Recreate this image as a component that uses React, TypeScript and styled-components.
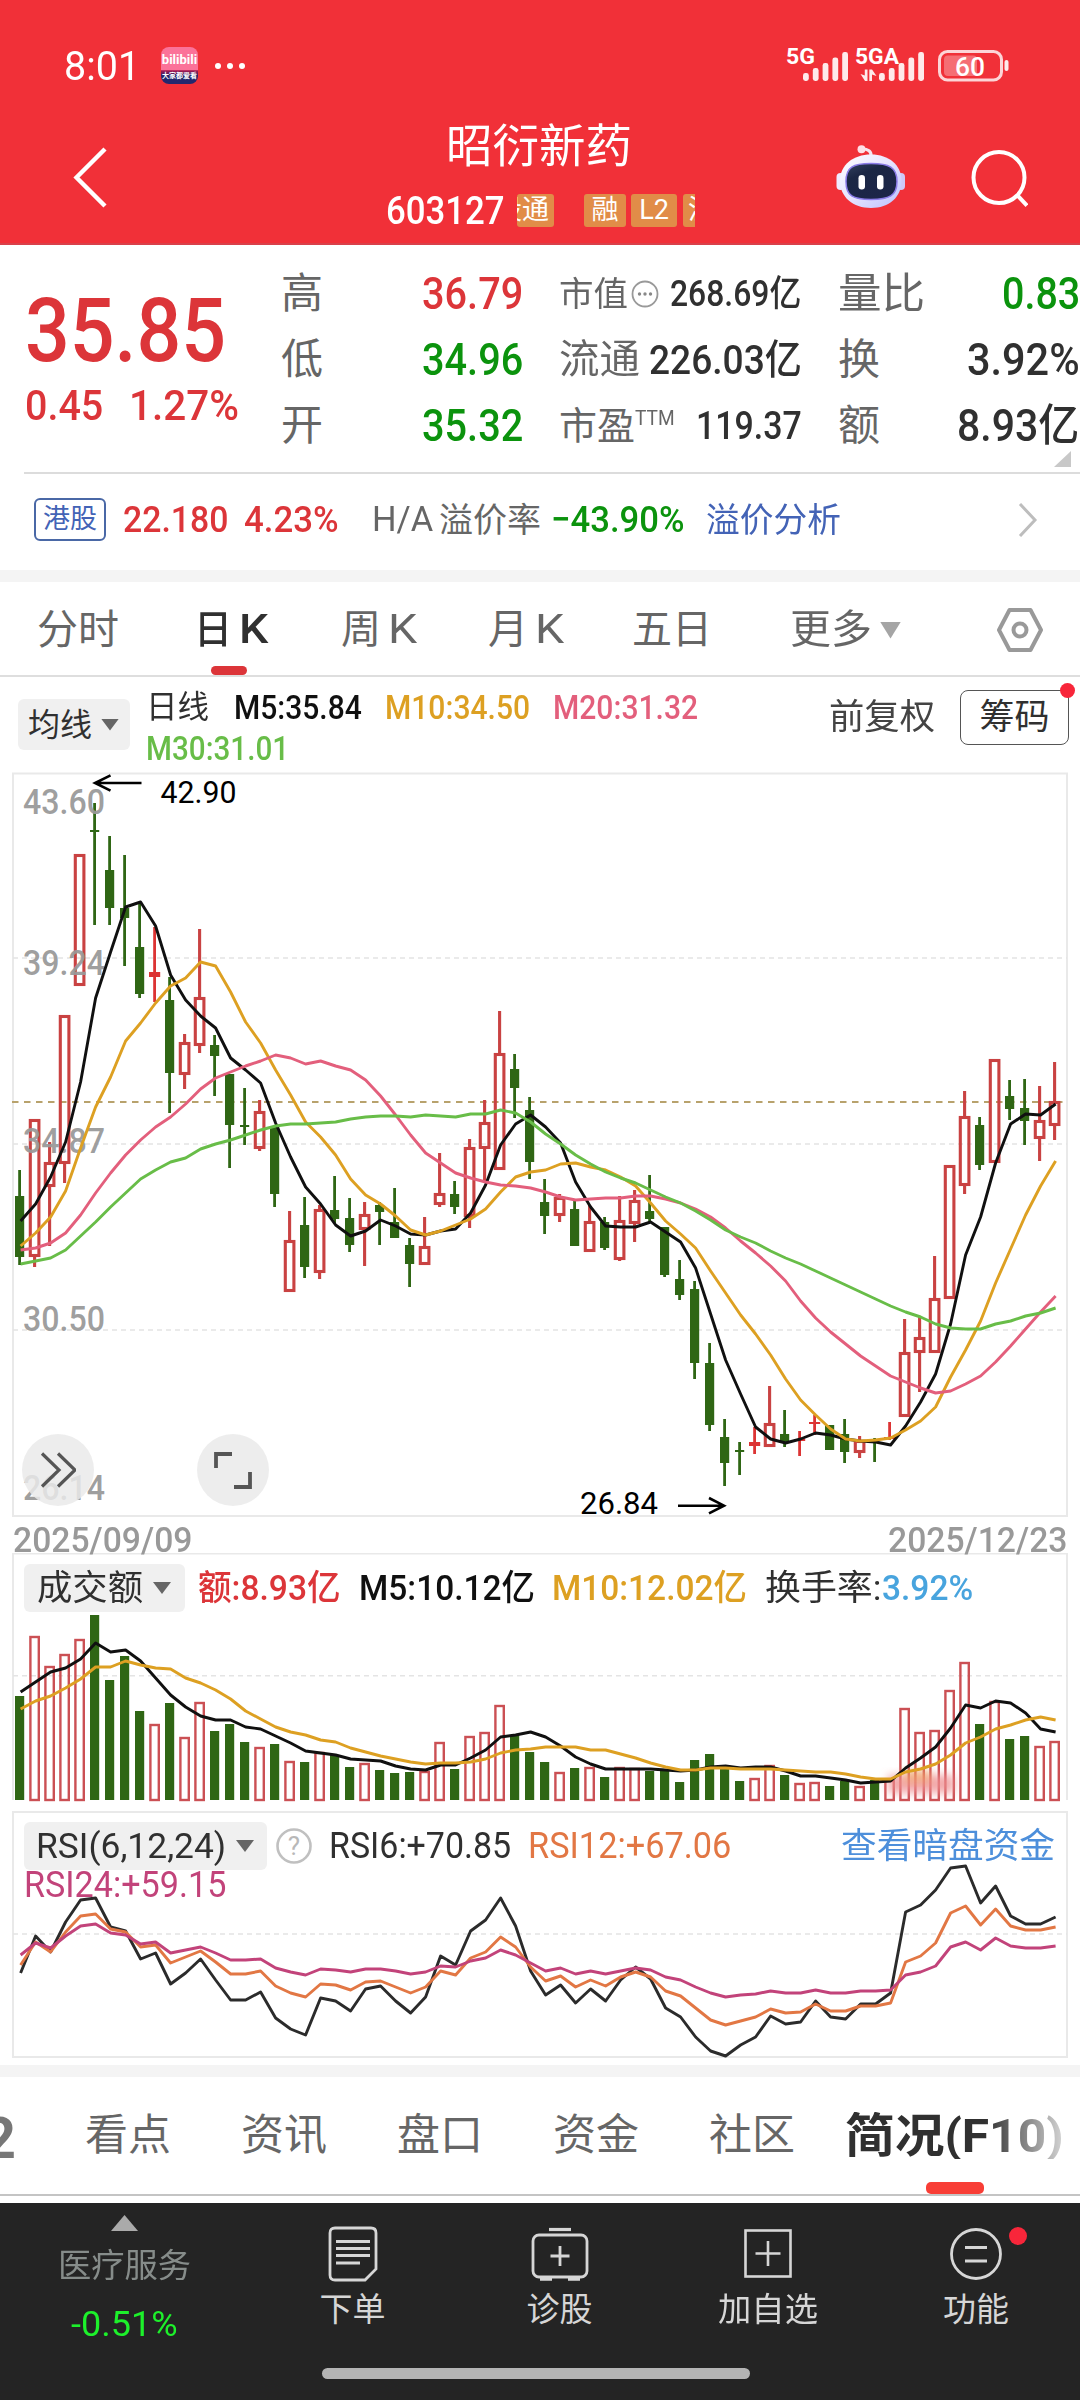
import React, { useLayoutEffect, useRef, useState } from 'react';
import styled, { createGlobalStyle, css } from 'styled-components';

const C = {
  brand: '#f13038',
  red: '#dc3539',
  green: '#0b930d',
  ink: '#303030',
  label: '#666666',
  muted: '#999999',
  up: '#c94242',
  down: '#2f6614',
  frame: '#e9e9e9',
  grid: '#e4e4e4',
  m5: '#101010',
  m10: '#dda022',
  m20: '#e35f7c',
  m30: '#68bd48',
  rsi12: '#e27744',
  rsi24: '#c2437a',
  blue: '#4363b6',
  link: '#4d8fdb',
  chip: '#f0f0f0',
  bar: '#242424',
  barText: '#d6d6d6',
};

const Global = createGlobalStyle`
  html, body { margin: 0; padding: 0; background: #fff; overflow-x: hidden; }
  body { font-family: Roboto, "Noto Sans CJK SC", sans-serif; color: ${C.ink}; }
  * { box-sizing: border-box; }
  svg { display: block; flex: none; }
`;

/* ---------- text set to a fixed measure ---------- */

const Measure = styled.span<{ $w: number; $ml: number; $size: number; $weight: number; $color: string; $up: number }>`
  display: block;
  flex: none;
  width: ${(p) => p.$w}px;
  margin-left: ${(p) => p.$ml}px;
  margin-bottom: ${(p) => p.$up}px;
  font-size: ${(p) => p.$size}px;
  font-weight: ${(p) => p.$weight};
  line-height: 1;
  color: ${(p) => p.$color};
  white-space: nowrap;
`;

const Glyphs = styled.span`
  display: inline-block;
  transform-origin: 0 50%;
  line-height: 1;
`;

type TextProps = {
  w: number;
  ml?: number;
  size: number;
  weight?: number;
  color?: string;
  up?: number;
  children: React.ReactNode;
};

function Text({ w, ml = 0, size, weight = 400, color = C.ink, up = 0, children }: TextProps) {
  const ref = useRef<HTMLSpanElement>(null);
  const [k, setK] = useState(1);
  useLayoutEffect(() => {
    if (ref.current && ref.current.offsetWidth) setK(w / ref.current.offsetWidth);
  }, [w, size, children]);
  return (
    <Measure $w={w} $ml={ml} $size={size} $weight={weight} $color={color} $up={up}>
      <Glyphs ref={ref} style={{ transform: `scaleX(${k})` }}>{children}</Glyphs>
    </Measure>
  );
}

/* ---------- layout parts ---------- */

const Screen = styled.main`
  width: 1080px;
  height: 2400px;
  display: flex;
  flex-direction: column;
  overflow: hidden;
  background: #fff;
`;

const Row = styled.div<{ $h: number; $pl?: number }>`
  display: flex;
  flex: none;
  align-items: center;
  height: ${(p) => p.$h}px;
  padding-left: ${(p) => p.$pl ?? 0}px;
`;

const Header = styled.header`
  flex: none;
  height: 245px;
  background: ${C.brand};
  border-bottom: 2px solid #d9414a;
`;

const StatusBar = styled(Row)`
  padding-top: 19px;
  svg + svg { margin-left: 18px; }
`;

const AppIcon = styled.span`
  display: flex;
  flex-direction: column;
  flex: none;
  width: 37px;
  height: 37px;
  margin-left: 21px;
  border-radius: 8px;
  overflow: hidden;
  background: linear-gradient(#fb7299 0 62%, #a5194f 64%, #24276d 78%);
`;

const AppIconLine = styled.span<{ $h: number; $size: number }>`
  height: ${(p) => p.$h}px;
  line-height: ${(p) => p.$h}px;
  font-size: ${(p) => p.$size}px;
  font-weight: 700;
  color: #fff;
  text-align: center;
  white-space: nowrap;
`;

const Dots = styled.span`
  display: flex;
  gap: 6px;
  margin-left: 17px;
  i { width: 6px; height: 6px; border-radius: 3px; background: #fff; }
`;

const Spacer = styled.span`
  flex: 1;
`;

const TitleRow = styled.div`
  display: grid;
  grid-template-columns: 386px 1fr 386px;
  height: 133px;
`;

const TitleSide = styled.div<{ $pl: number }>`
  display: flex;
  align-items: center;
  padding: 0 0 5px ${(p) => p.$pl}px;
`;

const TitleBlock = styled.div`
  padding-top: 7px;
`;

const Tags = styled.div`
  display: flex;
  width: 178px;
  height: 33px;
  margin-left: 12px;
  overflow: hidden;
`;

const Tag = styled.span<{ $w: number; $ml?: number; $align?: string }>`
  display: flex;
  flex: none;
  align-items: center;
  justify-content: ${(p) => p.$align ?? 'center'};
  width: ${(p) => p.$w}px;
  height: 33px;
  margin-left: ${(p) => p.$ml ?? 0}px;
  padding: 0 5px;
  border-radius: 3px;
  background: #e18c48;
  color: #fff;
  font-size: 27px;
  line-height: 1;
  white-space: nowrap;
`;

const Quote = styled.section`
  display: grid;
  flex: none;
  grid-template-columns: 281px 278px 279px 242px;
  height: 227px;
  padding-top: 14px;
`;

const PriceCell = styled.div`
  padding: 26px 0 0 25px;
`;

const Facts = styled.div`
  display: flex;
  flex-direction: column;
  padding-top: 2px;
`;

const CornerMark = styled.div`
  width: 17px;
  height: 16px;
  margin: -8px 0 0 216px;
  background: #c8c8c8;
  clip-path: polygon(100% 0, 100% 100%, 0 100%);
`;

const HkRow = styled.section`
  display: flex;
  flex: none;
  align-items: center;
  height: 98px;
  margin-left: 24px;
  padding: 0 42px 5px 10px;
  border-top: 2px solid #dcdcdc;
`;

const HkTag = styled.span`
  display: flex;
  flex: none;
  align-items: center;
  justify-content: center;
  width: 72px;
  height: 43px;
  border: 2px solid #4a68a6;
  border-radius: 6px;
`;

const Band = styled.div`
  flex: none;
  height: 12px;
  background: #f4f4f4;
`;

const Tabs = styled.nav<{ $h: number; $line: string }>`
  display: flex;
  flex: none;
  height: ${(p) => p.$h}px;
  border-bottom: 2px solid ${(p) => p.$line};
`;

const Tab = styled.div<{ $ml: number; $pt: number }>`
  display: flex;
  flex: none;
  flex-direction: column;
  align-items: center;
  justify-content: space-between;
  margin-left: ${(p) => p.$ml}px;
  padding-top: ${(p) => p.$pt}px;
`;

const Underline = styled.i<{ $w: number; $h: number; $color: string; $ml?: number }>`
  width: ${(p) => p.$w}px;
  height: ${(p) => p.$h}px;
  margin-left: ${(p) => p.$ml ?? 0}px;
  border-radius: 5px;
  background: ${(p) => p.$color};
`;

const Inline = styled.span`
  display: flex;
  align-items: center;
`;

const Triangle = styled.i<{ $w: number; $h: number; $ml: number; $color: string; $flip?: boolean }>`
  flex: none;
  width: ${(p) => p.$w}px;
  height: ${(p) => p.$h}px;
  margin-left: ${(p) => p.$ml}px;
  background: ${(p) => p.$color};
  clip-path: ${(p) => (p.$flip ? 'polygon(50% 0, 100% 100%, 0 100%)' : 'polygon(0 0, 100% 0, 50% 100%)')};
`;

const MaBar = styled.section`
  display: flex;
  flex: none;
  height: 95px;
`;

const Chip = styled.div<{ $w: number; $h: number; $pl: number }>`
  display: flex;
  flex: none;
  align-items: center;
  width: ${(p) => p.$w}px;
  height: ${(p) => p.$h}px;
  padding-left: ${(p) => p.$pl}px;
  border-radius: 6px;
  background: ${C.chip};
`;

const MaChipSlot = styled.div`
  width: 146px;
  padding: 22px 0 0 18px;
`;

const MaLegend = styled.div`
  width: 683px;
  padding-top: 9px;
`;

const MaActions = styled.div`
  display: flex;
  align-items: center;
  height: 55px;
  margin-top: 13px;
`;

const ChipsButton = styled.div`
  position: relative;
  display: flex;
  align-items: center;
  justify-content: center;
  width: 109px;
  height: 55px;
  margin-left: 25px;
  border: 1.5px solid #555;
  border-radius: 8px;
`;

const RedDot = styled.i<{ $d: number; $top: number; $right: number }>`
  position: absolute;
  top: ${(p) => p.$top}px;
  right: ${(p) => p.$right}px;
  width: ${(p) => p.$d}px;
  height: ${(p) => p.$d}px;
  border-radius: 50%;
  background: #f8263a;
`;

const stacked = css`
  grid-area: 1 / 1;
`;

const Pane = styled.section<{ $h: number }>`
  display: grid;
  flex: none;
  height: ${(p) => p.$h}px;
`;

const Plot = styled.svg`
  ${stacked}
`;

const Legend = styled.div<{ $pt: number }>`
  ${stacked}
  padding-top: ${(p) => p.$pt}px;
`;

const Tools = styled.div`
  ${stacked}
  display: flex;
  align-self: end;
  gap: 103px;
  padding: 0 0 47px 22px;
`;

const RoundTool = styled.div`
  display: flex;
  align-items: center;
  justify-content: center;
  width: 72px;
  height: 72px;
  border-radius: 50%;
  background: rgba(234, 234, 234, 0.84);
`;

const Dates = styled.div`
  ${stacked}
  display: flex;
  align-self: end;
  align-items: center;
  justify-content: space-between;
  height: 37px;
  padding: 12px 13px 0 13px;
`;

const ClippedGlyph = styled.span`
  display: flex;
  justify-content: flex-end;
  width: 16px;
  padding-top: 33px;
  overflow: hidden;
  font-size: 57px;
  font-weight: 700;
  line-height: 1;
  color: #777;
`;

const Fade = styled.span`
  display: block;
  mask-image: linear-gradient(90deg, #000 64%, rgba(0, 0, 0, 0.2) 100%);
`;

const BottomBar = styled.footer`
  display: flex;
  flex: none;
  flex-direction: column;
  align-items: center;
  height: 197px;
  margin-top: 7px;
  background: ${C.bar};
`;

const Actions = styled.div`
  display: grid;
  grid-template-columns: 249px 207px 207px 209px 208px;
  height: 165px;
`;

const Action = styled.div<{ $pt?: number }>`
  position: relative;
  display: flex;
  flex-direction: column;
  align-items: center;
  padding-top: ${(p) => p.$pt ?? 20}px;
`;

const IconSlot = styled.span`
  display: flex;
  align-items: center;
  height: 62px;
  margin-bottom: 8px;
`;

const HomeBar = styled.i`
  width: 428px;
  height: 11px;
  margin-right: 8px;
  border-radius: 6px;
  background: #b4b4b4;
`;

/* ---------- chart data (y positions in screen pixels) ---------- */

type Candle = [1 | 0, number, number, number, number];

const candles: Candle[] = [
  [0, 1170, 1196, 1257, 1265], [1, 1119, 1119, 1257, 1267], [1, 1142, 1162, 1187, 1246], [1, 1015, 1015, 1164, 1183],
  [1, 854, 854, 986, 986], [0, 803, 830, 832, 925], [0, 836, 870, 908, 925], [0, 855, 908, 918, 966],
  [0, 903, 947, 994, 998], [1, 927, 972, 977, 1002], [0, 977, 1000, 1073, 1113], [1, 1034, 1042, 1075, 1089],
  [1, 929, 997, 1046, 1053], [0, 1035, 1045, 1056, 1096], [0, 1074, 1074, 1125, 1168], [0, 1088, 1125, 1127, 1145],
  [1, 1100, 1111, 1149, 1151], [0, 1126, 1126, 1194, 1207], [1, 1211, 1240, 1292, 1292], [0, 1197, 1225, 1267, 1278],
  [1, 1205, 1209, 1273, 1279], [0, 1176, 1210, 1219, 1223], [0, 1198, 1218, 1245, 1252], [1, 1202, 1214, 1230, 1266],
  [0, 1202, 1205, 1212, 1245], [0, 1188, 1222, 1238, 1238], [0, 1238, 1245, 1264, 1287], [1, 1217, 1246, 1265, 1265],
  [1, 1153, 1193, 1205, 1207], [0, 1181, 1194, 1207, 1214], [1, 1139, 1147, 1217, 1228], [1, 1100, 1122, 1149, 1183],
  [1, 1011, 1053, 1170, 1170], [0, 1054, 1069, 1088, 1118], [0, 1097, 1110, 1162, 1179], [0, 1179, 1202, 1216, 1234],
  [1, 1194, 1197, 1216, 1222], [0, 1200, 1209, 1246, 1246], [1, 1205, 1221, 1252, 1252], [0, 1217, 1222, 1248, 1250],
  [1, 1196, 1220, 1260, 1261], [1, 1190, 1200, 1224, 1242], [0, 1175, 1211, 1219, 1222], [0, 1227, 1227, 1275, 1277],
  [0, 1260, 1279, 1295, 1300], [0, 1281, 1289, 1363, 1379], [0, 1343, 1363, 1425, 1431], [0, 1419, 1437, 1463, 1486],
  [0, 1442, 1450, 1452, 1475], [1, 1427, 1442, 1446, 1454], [1, 1386, 1423, 1447, 1447], [0, 1410, 1434, 1442, 1447],
  [1, 1431, 1439, 1441, 1456], [1, 1415, 1422, 1424, 1435], [0, 1425, 1425, 1450, 1450], [0, 1419, 1434, 1452, 1463],
  [1, 1436, 1440, 1453, 1458], [0, 1438, 1439, 1441, 1462], [1, 1422, 1437, 1439, 1440], [1, 1319, 1352, 1417, 1417],
  [1, 1317, 1337, 1353, 1392], [1, 1256, 1298, 1353, 1353], [1, 1165, 1165, 1299, 1299], [1, 1091, 1116, 1186, 1194],
  [0, 1117, 1125, 1165, 1170], [1, 1059, 1059, 1163, 1163], [0, 1080, 1096, 1109, 1120], [0, 1079, 1108, 1121, 1145],
  [1, 1086, 1120, 1139, 1161], [1, 1062, 1101, 1126, 1140],
];

const ma5 = [1221, 1204, 1177, 1142, 1082, 998, 952, 907, 902, 926, 975, 1000, 1016, 1028, 1058, 1070, 1083, 1123, 1157, 1187, 1204, 1225, 1236, 1231, 1220, 1226, 1234, 1235, 1231, 1229, 1213, 1185, 1145, 1124, 1115, 1127, 1143, 1182, 1207, 1226, 1227, 1227, 1222, 1232, 1242, 1268, 1314, 1360, 1394, 1427, 1439, 1443, 1439, 1433, 1435, 1439, 1441, 1442, 1445, 1426, 1402, 1374, 1324, 1255, 1217, 1163, 1124, 1114, 1115, 1104];
const ma10 = [1246, 1233, 1217, 1191, 1148, 1107, 1077, 1041, 1023, 1003, 986, 978, 962, 966, 992, 1022, 1043, 1070, 1095, 1122, 1137, 1155, 1179, 1195, 1204, 1216, 1230, 1235, 1231, 1225, 1219, 1209, 1192, 1177, 1172, 1170, 1164, 1163, 1167, 1170, 1177, 1186, 1203, 1221, 1234, 1248, 1271, 1293, 1315, 1334, 1355, 1379, 1400, 1415, 1429, 1439, 1441, 1440, 1438, 1430, 1421, 1407, 1377, 1350, 1321, 1283, 1249, 1215, 1186, 1161];
const ma20 = [1250, 1248, 1243, 1233, 1215, 1193, 1173, 1155, 1140, 1127, 1117, 1104, 1089, 1078, 1072, 1066, 1061, 1055, 1058, 1064, 1061, 1066, 1070, 1080, 1096, 1115, 1135, 1153, 1163, 1173, 1178, 1182, 1185, 1186, 1188, 1192, 1197, 1200, 1199, 1198, 1198, 1196, 1196, 1199, 1203, 1209, 1217, 1228, 1241, 1253, 1266, 1281, 1301, 1318, 1332, 1344, 1356, 1366, 1376, 1382, 1388, 1393, 1391, 1384, 1376, 1362, 1346, 1329, 1312, 1296];
const ma30 = [1264, 1261, 1258, 1250, 1236, 1222, 1207, 1193, 1179, 1170, 1162, 1158, 1149, 1144, 1140, 1135, 1130, 1126, 1124, 1124, 1123, 1122, 1119, 1117, 1116, 1116, 1117, 1115, 1116, 1117, 1114, 1114, 1110, 1113, 1122, 1134, 1144, 1155, 1164, 1172, 1178, 1183, 1190, 1197, 1203, 1211, 1220, 1230, 1237, 1243, 1251, 1258, 1264, 1271, 1278, 1285, 1292, 1299, 1306, 1312, 1317, 1324, 1328, 1329, 1329, 1324, 1321, 1316, 1313, 1308];

const volume = [1696, 1636, 1666, 1654, 1639, 1615, 1680, 1656, 1711, 1724, 1703, 1737, 1702, 1731, 1724, 1742, 1747, 1744, 1761, 1762, 1752, 1755, 1767, 1763, 1770, 1773, 1772, 1771, 1742, 1769, 1736, 1732, 1705, 1735, 1752, 1762, 1772, 1768, 1767, 1777, 1767, 1768, 1771, 1770, 1782, 1760, 1754, 1769, 1781, 1778, 1765, 1775, 1783, 1782, 1786, 1781, 1786, 1780, 1780, 1708, 1732, 1730, 1690, 1662, 1724, 1701, 1739, 1736, 1746, 1741];
const vol5 = [1692, 1682, 1672, 1668, 1659, 1643, 1652, 1650, 1661, 1678, 1695, 1707, 1716, 1720, 1720, 1727, 1729, 1736, 1743, 1751, 1753, 1755, 1759, 1760, 1761, 1766, 1769, 1770, 1765, 1765, 1758, 1750, 1737, 1735, 1732, 1737, 1746, 1757, 1764, 1769, 1769, 1769, 1769, 1770, 1771, 1770, 1767, 1766, 1768, 1767, 1767, 1771, 1776, 1776, 1778, 1780, 1783, 1782, 1781, 1768, 1758, 1747, 1728, 1705, 1708, 1701, 1703, 1713, 1729, 1732];
const vol10 = [1709, 1701, 1696, 1688, 1679, 1667, 1667, 1661, 1665, 1668, 1669, 1678, 1683, 1690, 1699, 1711, 1719, 1727, 1732, 1735, 1740, 1742, 1748, 1752, 1756, 1759, 1762, 1764, 1763, 1763, 1762, 1759, 1753, 1750, 1749, 1747, 1747, 1747, 1750, 1750, 1754, 1758, 1763, 1767, 1770, 1770, 1768, 1768, 1769, 1769, 1769, 1770, 1771, 1772, 1772, 1774, 1777, 1779, 1779, 1772, 1769, 1764, 1755, 1743, 1737, 1729, 1725, 1720, 1717, 1720];

const rsi6 = [1973, 1936, 1952, 1922, 1900, 1898, 1927, 1931, 1959, 1953, 1984, 1973, 1959, 1980, 2000, 2000, 1992, 2018, 2029, 2035, 1998, 2001, 2011, 1989, 1986, 2001, 2013, 1997, 1956, 1965, 1931, 1920, 1898, 1926, 1971, 1995, 1985, 2003, 1989, 2001, 1980, 1967, 1979, 2008, 2017, 2037, 2051, 2056, 2045, 2037, 2016, 2024, 2022, 2001, 2017, 2019, 2004, 2004, 1993, 1912, 1905, 1890, 1868, 1866, 1903, 1886, 1916, 1924, 1924, 1917];
const rsi12 = [1965, 1942, 1952, 1932, 1916, 1914, 1929, 1932, 1947, 1945, 1963, 1957, 1951, 1962, 1974, 1974, 1971, 1986, 1993, 1997, 1984, 1985, 1990, 1982, 1981, 1987, 1993, 1987, 1971, 1975, 1958, 1952, 1937, 1947, 1967, 1981, 1976, 1987, 1980, 1986, 1977, 1972, 1977, 1991, 1996, 2008, 2020, 2025, 2021, 2017, 2009, 2013, 2012, 2004, 2011, 2011, 2006, 2006, 2003, 1962, 1956, 1943, 1913, 1906, 1925, 1909, 1926, 1930, 1930, 1927];
const rsi24 = [1955, 1943, 1948, 1936, 1926, 1924, 1933, 1935, 1944, 1942, 1953, 1950, 1947, 1953, 1960, 1960, 1959, 1968, 1972, 1975, 1969, 1970, 1972, 1969, 1969, 1971, 1974, 1972, 1966, 1967, 1961, 1958, 1950, 1955, 1963, 1971, 1968, 1974, 1971, 1974, 1971, 1968, 1970, 1977, 1980, 1987, 1993, 1997, 1995, 1994, 1991, 1993, 1993, 1990, 1993, 1993, 1991, 1991, 1990, 1975, 1972, 1966, 1947, 1942, 1950, 1938, 1946, 1948, 1948, 1946];

const xAt = (i: number) => 19.6 + i * 15;

function Line({ ys, color }: { ys: number[]; color: string }) {
  const pts = ys.map((y, i) => `${(xAt(i) + 1).toFixed(1)},${y}`).join(' ');
  return <polyline points={pts} fill="none" stroke={color} strokeWidth={2.9} strokeLinejoin="round" />;
}

const GridLine = ({ y }: { y: number }) => (
  <line x1={13} x2={1067} y1={y} y2={y} stroke={C.grid} strokeWidth={1.6} strokeDasharray="5 4" />
);

function CandleMark({ c, i }: { c: Candle; i: number }) {
  const [up, high, top, bottom, low] = c;
  const x = xAt(i);
  const color = up ? C.up : C.down;
  const thin = bottom - top < 6;
  if (up && !thin) {
    return (
      <g stroke={color} strokeWidth={3.1} fill="none">
        {high < top && <line x1={x} x2={x} y1={high} y2={top} />}
        {low > bottom && <line x1={x} x2={x} y1={bottom} y2={low} />}
        <rect x={x - 4.3} y={top + 1.5} width={8.6} height={bottom - top - 3} />
      </g>
    );
  }
  const half = up ? 5.6 : 4.6;
  return (
    <g fill={up ? '#dc3434' : color}>
      <rect x={x - 1.4} y={high} width={2.8} height={low - high} />
      <rect x={x - half} y={top} width={half * 2} height={bottom - top} />
    </g>
  );
}

const scale = [
  { t: '43.60', y: 814 },
  { t: '39.24', y: 975 },
  { t: '34.87', y: 1153 },
  { t: '30.50', y: 1331 },
  { t: '26.14', y: 1500 },
];

function PricePlot() {
  return (
    <Plot width={1080} height={781} viewBox="0 772 1080 781">
      <rect x={13} y={773.5} width={1054} height={742.5} fill="none" stroke={C.frame} strokeWidth={2} />
      <GridLine y={958} />
      <GridLine y={1144} />
      <GridLine y={1330} />
      <line x1={12} x2={1067} y1={1102} y2={1102} stroke="#b8a26c" strokeWidth={2} strokeDasharray="6.5 5.5" />
      {candles.map((c, i) => <CandleMark key={i} c={c} i={i} />)}
      {scale.map((s) => (
        <text key={s.t} x={23} y={s.y} fontSize={35} fontWeight={500} fill={C.muted} fillOpacity={0.95} textLength={82} lengthAdjust="spacingAndGlyphs">{s.t}</text>
      ))}
      <Line ys={ma5} color={C.m5} />
      <Line ys={ma10} color={C.m10} />
      <Line ys={ma20} color={C.m20} />
      <Line ys={ma30} color={C.m30} />
      <g stroke="#000" strokeWidth={2.6} fill="none">
        <path d="M141.5 783H95M110.5 775.3L95 783L110.5 790.7" />
        <path d="M678 1505.7H724M709 1498L724 1505.7L709 1513.4" />
      </g>
      <text x={160.5} y={803} fontSize={31} fill="#000" textLength={76} lengthAdjust="spacingAndGlyphs">42.90</text>
      <text x={580} y={1514} fontSize={31} fill="#000" textLength={78} lengthAdjust="spacingAndGlyphs">26.84</text>
    </Plot>
  );
}

function VolumePlot() {
  return (
    <Plot width={1080} height={258} viewBox="0 1553 1080 258">
      <defs>
        <filter id="smudge" x="-20%" y="-40%" width="140%" height="180%">
          <feGaussianBlur stdDeviation="4" />
        </filter>
      </defs>
      <path d="M13 1800V1553.5H1067V1800" fill="none" stroke={C.frame} strokeWidth={2} />
      <GridLine y={1675.7} />
      {volume.map((y, i) =>
        candles[i][0] ? (
          <rect key={i} x={xAt(i) - 4.2} y={y + 1} width={8.4} height={1799 - y} fill="none" stroke="#cb5054" strokeWidth={2.4} />
        ) : (
          <rect key={i} x={xAt(i) - 4.6} y={y} width={9.2} height={1800 - y} fill={C.down} />
        ),
      )}
      <rect x={888} y={1775} width={66} height={18} fill="#ee8d90" fillOpacity={0.75} filter="url(#smudge)" />
      <rect x={904} y={1770} width={26} height={12} fill="#f0a35a" fillOpacity={0.6} filter="url(#smudge)" />
      <Line ys={vol5} color={C.m5} />
      <Line ys={vol10} color={C.m10} />
    </Plot>
  );
}

function RsiPlot() {
  return (
    <Plot width={1080} height={254} viewBox="0 1811 1080 254">
      <rect x={13} y={1812} width={1054} height={245} fill="none" stroke={C.frame} strokeWidth={2} />
      <GridLine y={1934} />
      <Line ys={rsi6} color="#2b2b2b" />
      <Line ys={rsi12} color={C.rsi12} />
      <Line ys={rsi24} color={C.rsi24} />
    </Plot>
  );
}

/* ---------- icons ---------- */

const barTops = [72, 67, 62, 56.5, 51];

const SignalIcons = () => (
  <svg width={232} height={44} viewBox="780 43 232 44" fill="#fff">
    <text x={786} y={62.5} fontSize={22} fontWeight={700} textLength={29} lengthAdjust="spacingAndGlyphs">5G</text>
    <text x={855} y={62.5} fontSize={22} fontWeight={700} textLength={44} lengthAdjust="spacingAndGlyphs">5GA</text>
    <g fillOpacity={0.9}>
      {barTops.map((y, i) => <rect key={y} x={803 + i * 9.8} y={y} width={5.8} height={80 - y} rx={2.4} />)}
      {barTops.map((y, i) => <rect key={y} x={879 + i * 9.8} y={y} width={5.8} height={80 - y} rx={2.4} />)}
      <path d="M860.5 73L865 80H867.500V68.500H864.800V74.500ZM876.500 75L872 68.500H869.300V80H872V73.500Z" />
    </g>
    <rect x={939.5} y={50.5} width={62} height={28.5} rx={8} fill="none" stroke="#fff" strokeOpacity={0.8} strokeWidth={3} />
    <rect x={944} y={54.5} width={33} height={20.5} rx={4} fillOpacity={0.3} />
    <rect x={1004.500} y={59} width={4} height={11} rx={2} fillOpacity={0.9} />
    <text x={955} y={74.500} fontSize={26} fontWeight={500} textLength={30} lengthAdjust="spacingAndGlyphs">60</text>
  </svg>
);

const BackIcon = () => (
  <svg width={36} height={62} viewBox="0 0 36 62" fill="none" stroke="#fff" strokeWidth={4.4}>
    <path d="M33 2L4.500 30.500L33 59" />
  </svg>
);

const RobotIcon = () => (
  <svg width={72} height={68} viewBox="0 0 72 68">
    <defs>
      <linearGradient id="shell" x1="0" y1="0" x2="1" y2="1">
        <stop offset="0" stopColor="#fff" />
        <stop offset="0.5" stopColor="#e6e3ff" />
        <stop offset="1" stopColor="#b9c0ff" />
      </linearGradient>
      <linearGradient id="visor" x1="0" y1="0" x2="0.6" y2="1">
        <stop offset="0" stopColor="#33415f" />
        <stop offset="0.35" stopColor="#1b2744" />
        <stop offset="1" stopColor="#1c2548" />
      </linearGradient>
    </defs>
    <path d="M37 12Q37.500 5 28 5" fill="none" stroke="#f4e4f0" strokeWidth={3.2} />
    <circle cx={27.500} cy={5.200} r={4} fill="#ffdfe6" />
    <rect x={2.500} y={29} width={8} height={17} rx={4} fill="#efeaff" />
    <rect x={63} y={29} width={8} height={17} rx={4} fill="#cfc8f8" />
    <path d="M37 10.500C55 10.500 67.500 21 67.500 37C67.500 53 55 64 37 64S6 53 6 37C6 21 19 10.500 37 10.500Z" fill="url(#shell)" />
    <path d="M37 19.500C55 19.500 63 23 63 37.500C63 52 55 55.500 37 55.500S12 52 12 37.500C12 23 19 19.500 37 19.500Z" fill="url(#visor)" stroke="#8b7ce8" strokeWidth={1.500} />
    <rect x={24.500} y={31} width={6.500} height={14.500} rx={3.200} fill="#fff" />
    <rect x={43} y={31} width={6.500} height={14.500} rx={3.200} fill="#fff" />
  </svg>
);

const SearchIcon = () => (
  <svg width={60} height={60} viewBox="0 0 60 60" fill="none" stroke="#fff" strokeWidth={4}>
    <circle cx={31} cy={29.5} r={25.5} />
    <path d="M48.500 46.500L59 57.500" />
  </svg>
);

const MoreDots = () => (
  <svg width={28} height={28} viewBox="0 0 28 28" fill="none" stroke="#999" strokeWidth={1.8}>
    <circle cx={14} cy={14} r={12.5} />
    <g fill="#888" stroke="none">
      <circle cx={8.5} cy={14} r={1.7} /><circle cx={14} cy={14} r={1.7} /><circle cx={19.5} cy={14} r={1.7} />
    </g>
  </svg>
);

const HexIcon = () => (
  <svg width={48} height={46} viewBox="0 0 48 46" fill="none" stroke="#999" strokeWidth={4} strokeLinejoin="round">
    <path d="M13.5 3H34.5L45 23L34.5 43H13.5L3 23Z" />
    <circle cx={24} cy={23} r={6.5} />
  </svg>
);

const OrderIcon = () => (
  <svg width={50} height={56} viewBox="0 0 50 56" fill="none" stroke={C.barText} strokeWidth={2.8}>
    <path d="M7 2H43Q48 2 48 7V43L37 54H7Q2 54 2 49V7Q2 2 7 2Z" />
    <path d="M8 15.5H42M8 22.5H42M8 29.5H42M8 37H32" />
  </svg>
);

const DiagnoseIcon = () => (
  <svg width={58} height={54} viewBox="0 0 58 54" fill="none" stroke={C.barText} strokeWidth={2.8}>
    <path d="M18 2.5H40" strokeWidth={3.2} />
    <rect x={2} y={8} width={54} height={42} rx={6} />
    <path d="M29 19V39M19.5 29H38.5" />
    <path d="M9 52H21M37 52H49" strokeWidth={3.5} />
  </svg>
);

const AddIcon = () => (
  <svg width={48} height={50} viewBox="0 0 48 50" fill="none" stroke={C.barText} strokeWidth={2.6}>
    <rect x={1.5} y={1.5} width={45} height={46} />
    <path d="M24 12V37M11.5 24.5H36.5" />
  </svg>
);

const MenuIcon = () => (
  <svg width={52} height={52} viewBox="0 0 52 52" fill="none" stroke={C.barText} strokeWidth={2.8}>
    <circle cx={26} cy={26} r={24.5} />
    <path d="M15 19.5H37M15 33H37" />
  </svg>
);

/* ---------- sections ---------- */

function TopHeader() {
  return (
    <Header>
      <StatusBar $h={112} $pl={64}>
        <Text w={76} size={41} color="#fff" up={-2}>8:01</Text>
        <AppIcon>
          <AppIconLine $h={25} $size={13}>bilibili</AppIconLine>
          <AppIconLine $h={9} $size={7}>大家都爱看</AppIconLine>
        </AppIcon>
        <Dots><i /><i /><i /></Dots>
        <Spacer />
        <SignalIcons />
        <svg width={50} height={1} />
      </StatusBar>
      <TitleRow>
        <TitleSide $pl={72}><BackIcon /></TitleSide>
        <TitleBlock>
          <Row $h={54} $pl={60}><Text w={186} size={46} color="#fff">昭衍新药</Text></Row>
          <Row $h={75}>
            <Text w={119} size={38} weight={500} color="#fff">603127</Text>
            <Tags>
              <Tag $w={37} $align="flex-end">股通</Tag>
              <Tag $w={42} $ml={30}>融</Tag>
              <Tag $w={46} $ml={5}>L2</Tag>
              <Tag $w={42} $ml={6} $align="flex-start">沪</Tag>
            </Tags>
          </Row>
        </TitleBlock>
        <TitleSide $pl={139}>
          <RobotIcon />
          <svg width={62} height={1} />
          <SearchIcon />
        </TitleSide>
      </TitleRow>
    </Header>
  );
}

function QuotePanel() {
  return (
    <Quote>
      <PriceCell>
        <Row $h={90}><Text w={201} size={89} weight={500} color={C.red}>35.85</Text></Row>
        <Row $h={60}>
          <Text w={78} size={43} weight={500} color={C.red}>0.45</Text>
          <Text w={110} ml={26} size={43} weight={500} color={C.red}>1.27%</Text>
        </Row>
      </PriceCell>
      <Facts>
        <Row $h={66}><Text w={42} size={42} color={C.label}>高</Text><Text w={101} ml={99} size={44} weight={500} color={C.red}>36.79</Text></Row>
        <Row $h={66}><Text w={42} size={42} color={C.label}>低</Text><Text w={101} ml={99} size={44} weight={500} color={C.green}>34.96</Text></Row>
        <Row $h={66}><Text w={42} size={42} color={C.label}>开</Text><Text w={101} ml={99} size={44} weight={500} color={C.green}>35.32</Text></Row>
      </Facts>
      <Facts>
        <Row $h={66}>
          <Text w={69} size={34} color={C.label}>市值</Text>
          <svg width={3} height={1} />
          <MoreDots />
          <Text w={131} ml={11} size={36} weight={500}>268.69亿</Text>
        </Row>
        <Row $h={66}><Text w={81} size={40} color={C.label}>流通</Text><Text w={153} ml={9} size={41} weight={500}>226.03亿</Text></Row>
        <Row $h={66}>
          <Text w={76} size={38} color={C.label}>市盈</Text>
          <Text w={40} size={21} color={C.label} up={16}>TTM</Text>
          <Text w={106} ml={21} size={39} weight={500}>119.37</Text>
        </Row>
      </Facts>
      <Facts>
        <Row $h={66}><Text w={87} size={42} color={C.label}>量比</Text><Text w={78} ml={77} size={44} weight={500} color={C.green}>0.83</Text></Row>
        <Row $h={66}><Text w={42} size={42} color={C.label}>换</Text><Text w={113} ml={87} size={44} weight={500}>3.92%</Text></Row>
        <Row $h={66}><Text w={42} size={42} color={C.label}>额</Text><Text w={122} ml={77} size={44} weight={500}>8.93亿</Text></Row>
        <CornerMark />
      </Facts>
    </Quote>
  );
}

function HkPanel() {
  return (
    <HkRow>
      <HkTag><Text w={54} size={27} color={C.blue}>港股</Text></HkTag>
      <Text w={105} ml={17} size={37} weight={500} color={C.red}>22.180</Text>
      <Text w={95} ml={16} size={37} weight={500} color={C.red}>4.23%</Text>
      <Text w={61} ml={33} size={35} color={C.label}>H/A</Text>
      <Text w={102} ml={6} size={34} color={C.label}>溢价率</Text>
      <Text w={133} ml={10} size={37} weight={500} color={C.green}>−43.90%</Text>
      <Text w={135} ml={22} size={34} color={C.blue}>溢价分析</Text>
      <Spacer />
      <svg width={20} height={34} viewBox="0 0 20 34" fill="none" stroke="#bdbdbd" strokeWidth={3}><path d="M2 1L17 17L2 33" /></svg>
    </HkRow>
  );
}

function PeriodTabs() {
  return (
    <Tabs $h={95} $line="#dedede">
      <Tab $ml={37} $pt={28}><Text w={82} size={41} color={C.label}>分时</Text></Tab>
      <Tab $ml={75} $pt={28}>
        <Inline><Text w={38} size={39} weight={500}>日</Text><Text w={29} ml={7} size={40} weight={500}>K</Text></Inline>
        <Underline $w={36} $h={9} $color={C.red} $ml={-4} />
      </Tab>
      <Tab $ml={73} $pt={28}><Inline><Text w={40} size={40} color={C.label}>周</Text><Text w={29} ml={7} size={40} color={C.label}>K</Text></Inline></Tab>
      <Tab $ml={71} $pt={28}><Inline><Text w={40} size={40} color={C.label}>月</Text><Text w={29} ml={7} size={40} color={C.label}>K</Text></Inline></Tab>
      <Tab $ml={68} $pt={28}><Text w={80} size={40} color={C.label}>五日</Text></Tab>
      <Tab $ml={78} $pt={28}>
        <Inline><Text w={82} size={40} color={C.label}>更多</Text><Triangle $w={21} $h={17} $ml={8} $color="#a5a5a5" /></Inline>
      </Tab>
      <Tab $ml={95} $pt={25}><HexIcon /></Tab>
    </Tabs>
  );
}

function MaPanel() {
  return (
    <MaBar>
      <MaChipSlot>
        <Chip $w={112} $h={51} $pl={10}><Text w={64} size={32}>均线</Text><Triangle $w={18} $h={12} $ml={9} $color="#666" /></Chip>
      </MaChipSlot>
      <MaLegend>
        <Row $h={42}>
          <Text w={63} size={32}>日线</Text>
          <Text w={128} ml={25} size={34} weight={500} color={C.m5}>M5:35.84</Text>
          <Text w={145} ml={23} size={34} weight={500} color={C.m10}>M10:34.50</Text>
          <Text w={145} ml={23} size={34} weight={500} color={C.m20}>M20:31.32</Text>
        </Row>
        <Row $h={40}><Text w={143} size={34} weight={500} color={C.m30}>M30:31.01</Text></Row>
      </MaLegend>
      <MaActions>
        <Text w={106} size={35} color="#444">前复权</Text>
        <ChipsButton>
          <Text w={70} size={35}>筹码</Text>
          <RedDot $d={15} $top={-8} $right={-7} />
        </ChipsButton>
      </MaActions>
    </MaBar>
  );
}

function PricePane() {
  return (
    <Pane $h={781}>
      <PricePlot />
      <Tools>
        <RoundTool>
          <svg width={36} height={36} viewBox="0 0 36 36" fill="none" stroke="#555" strokeWidth={3.2}><path d="M2 1.5L19 18L2 34.5M18 1.5L35 18L18 34.5" /></svg>
        </RoundTool>
        <RoundTool>
          <svg width={38} height={38} viewBox="0 0 38 38" fill="none" stroke="#555" strokeWidth={3.8}><path d="M2 17V3H18M36 21V36H20" /></svg>
        </RoundTool>
      </Tools>
      <Dates>
        <Text w={179} size={35} weight={500} color={C.muted}>2025/09/09</Text>
        <Text w={179} size={35} weight={500} color={C.muted}>2025/12/23</Text>
      </Dates>
    </Pane>
  );
}

function VolumePane() {
  return (
    <Pane $h={258}>
      <VolumePlot />
      <Legend $pt={11}>
        <Row $h={48} $pl={24}>
          <Chip $w={161} $h={48} $pl={13}><Text w={106} size={35}>成交额</Text><Triangle $w={18} $h={12} $ml={10} $color="#666" /></Chip>
          <Text w={143} ml={13} size={35} weight={500} color={C.red}>额:8.93亿</Text>
          <Text w={176} ml={18} size={35} weight={500} color={C.m5}>M5:10.12亿</Text>
          <Text w={195} ml={17} size={35} weight={500} color={C.m10}>M10:12.02亿</Text>
          <Text w={116} ml={18} size={35}>换手率:</Text>
          <Text w={91} ml={1} size={35} weight={500} color="#48a4de">3.92%</Text>
        </Row>
      </Legend>
    </Pane>
  );
}

function RsiPane() {
  return (
    <Pane $h={254}>
      <RsiPlot />
      <Legend $pt={11}>
        <Row $h={48} $pl={24}>
          <Chip $w={243} $h={48} $pl={12}><Text w={190} size={35}>RSI(6,12,24)</Text><Triangle $w={18} $h={12} $ml={10} $color="#666" /></Chip>
          <svg width={62} height={36} viewBox="0 0 62 36" fill="none" stroke="#c0c0c0" strokeWidth={2.6}>
            <circle cx={27} cy={18} r={16.5} />
            <text x={27} y={27} fontSize={26} fill="#b8b8b8" stroke="none" textAnchor="middle">?</text>
          </svg>
          <Text w={182} size={36}>RSI6:+70.85</Text>
          <Text w={203} ml={17} size={36} color={C.rsi12}>RSI12:+67.06</Text>
          <Text w={214} ml={110} size={35} color={C.link}>查看暗盘资金</Text>
        </Row>
        <Row $h={30} $pl={24}><Text w={202} size={36} color={C.rsi24}>RSI24:+59.15</Text></Row>
      </Legend>
    </Pane>
  );
}

function InfoTabs() {
  const plain = ['看点', '资讯', '盘口', '资金', '社区'];
  return (
    <Tabs $h={119} $line="#c4c4c4">
      <ClippedGlyph>2</ClippedGlyph>
      {plain.map((t, i) => (
        <Tab key={t} $ml={i ? 70 : 69} $pt={37}><Text w={86} size={43} color={C.label}>{t}</Text></Tab>
      ))}
      <Tab $ml={50} $pt={35}>
        <Fade><Text w={219} size={47} weight={700}>简况(F10)</Text></Fade>
        <Underline $w={58} $h={12} $color="#f83e36" />
      </Tab>
    </Tabs>
  );
}

function Footer() {
  return (
    <BottomBar>
      <Actions>
        <Action $pt={12}>
          <Triangle $w={27} $h={16} $ml={0} $color="#aaa" $flip />
          <Row $h={68}><Text w={133} size={33} color="#868c8a">医疗服务</Text></Row>
          <Row $h={50}><Text w={107} size={35} color="#1df02b">-0.51%</Text></Row>
        </Action>
        <Action><IconSlot><OrderIcon /></IconSlot><Text w={66} size={33} color={C.barText}>下单</Text></Action>
        <Action><IconSlot><DiagnoseIcon /></IconSlot><Text w={66} size={33} color={C.barText}>诊股</Text></Action>
        <Action><IconSlot><AddIcon /></IconSlot><Text w={100} size={33} color={C.barText}>加自选</Text></Action>
        <Action>
          <IconSlot><MenuIcon /></IconSlot><Text w={66} size={33} color={C.barText}>功能</Text>
          <RedDot $d={18} $top={24} $right={53} />
        </Action>
      </Actions>
      <HomeBar />
    </BottomBar>
  );
}

export default function App() {
  return (
    <>
      <Global />
      <Screen>
        <TopHeader />
        <QuotePanel />
        <HkPanel />
        <Band />
        <PeriodTabs />
        <MaPanel />
        <PricePane />
        <VolumePane />
        <RsiPane />
        <Band />
        <InfoTabs />
        <Footer />
      </Screen>
    </>
  );
}
